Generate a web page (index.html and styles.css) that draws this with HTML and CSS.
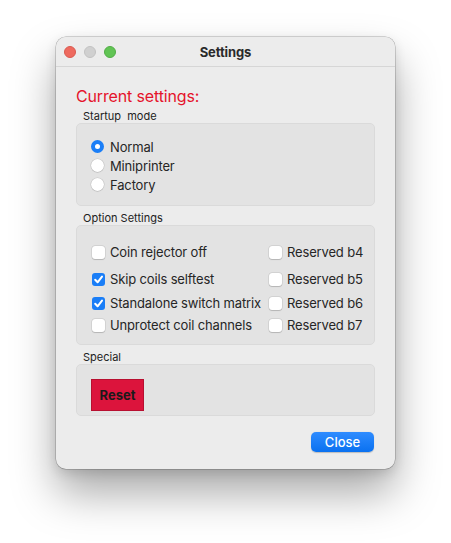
FILE: index.html
```html
<!DOCTYPE html>
<html>
<head>
<meta charset="utf-8">
<link rel="stylesheet" href="styles.css">
</head>
<body>
<div class="window">
  <div class="titlebar">
    <div class="lights">
      <span class="light red"></span>
      <span class="light gray"></span>
      <span class="light green"></span>
    </div>
    <div class="title">Settings</div>
  </div>
  <div class="content">
    <h1 class="heading">Current settings:</h1>

    <div class="group-label">Startup&nbsp; mode</div>
    <div class="group radios">
      <label class="radio-row"><span class="radio on"></span>Normal</label>
      <label class="radio-row"><span class="radio"></span>Miniprinter</label>
      <label class="radio-row"><span class="radio"></span>Factory</label>
    </div>

    <div class="group-label">Option Settings</div>
    <div class="group options">
      <div class="opt"><span class="check"></span>Coin rejector off</div>
      <div class="opt"><span class="check"></span>Reserved b4</div>
      <div class="opt"><span class="check on"><svg viewBox="0 0 13 13"><path d="M3.2 6.8 L5.6 9.3 L10 3.6" fill="none" stroke="#fff" stroke-width="2" stroke-linecap="round" stroke-linejoin="round"/></svg></span>Skip coils selftest</div>
      <div class="opt"><span class="check"></span>Reserved b5</div>
      <div class="opt"><span class="check on"><svg viewBox="0 0 13 13"><path d="M3.2 6.8 L5.6 9.3 L10 3.6" fill="none" stroke="#fff" stroke-width="2" stroke-linecap="round" stroke-linejoin="round"/></svg></span>Standalone switch matrix</div>
      <div class="opt"><span class="check"></span>Reserved b6</div>
      <div class="opt"><span class="check"></span>Unprotect coil channels</div>
      <div class="opt"><span class="check"></span>Reserved b7</div>
    </div>

    <div class="group-label">Special</div>
    <div class="group special">
      <button class="reset">Reset</button>
    </div>

    <div class="footer">
      <button class="close">Close</button>
    </div>
  </div>
</div>
</body>
</html>
```

FILE: styles.css
```css
html, body {
  margin: 0;
  background: #ffffff;
}
body {
  padding: 37px 0 74px 56px;
  min-height: 543px;
  box-sizing: border-box;
  font-family: Inter, "Liberation Sans", sans-serif;
  color: #262626;
}
.window {
  width: 339px;
  height: 432px;
  box-sizing: border-box;
  border-radius: 10px;
  background: #ececec;
  box-shadow: 0 0 0 0.5px rgba(0,0,0,0.3), 0 24px 44px rgba(0,0,0,0.34), 0 4px 12px rgba(0,0,0,0.12);
  overflow: hidden;
}
.titlebar {
  height: 29px;
  border-bottom: 1px solid #d6d6d6;
  background: #ececec;
  position: relative;
  display: flex;
  align-items: center;
  justify-content: center;
}
.lights {
  position: absolute;
  left: 8px;
  top: 9px;
  display: flex;
  gap: 8px;
}
.light {
  width: 12px;
  height: 12px;
  border-radius: 50%;
  box-sizing: border-box;
}
.light.red { background: #ee6a5f; border: 0.5px solid #d95a50; }
.light.gray { background: #d0d0d0; border: 0.5px solid #c2c2c2; }
.light.green { background: #61c454; border: 0.5px solid #52ad46; }
.title {
  font-size: 13px;
  font-weight: 700;
  color: #2a2a2a;
  letter-spacing: -0.1px;
}
.content {
  padding: 19px 20px 0 20px;
}
.heading {
  margin: 0;
  font-size: 16px;
  font-weight: 400;
  line-height: 20px;
  color: #e5132b;
  letter-spacing: -0.15px;
}
.group-label {
  font-size: 11px;
  line-height: 13px;
  padding-left: 7px;
  margin-top: 4px;
  color: #222;
}
.group {
  background: #e3e3e3;
  border: 1px solid #dadada;
  border-radius: 5px;
  box-sizing: border-box;
  margin-bottom: 6px;
}
.radios {
  height: 83px;
  padding: 13px 0 0 14px;
  display: flex;
  flex-direction: column;
}
.radio-row {
  display: flex;
  align-items: center;
  height: 19px;
  font-size: 13px;
  letter-spacing: -0.15px;
  color: #262626;
}
.radio {
  width: 13px;
  height: 13px;
  border-radius: 50%;
  background: #fff;
  box-shadow: 0 0 0 0.5px rgba(0,0,0,0.12), 0 0.5px 1px rgba(0,0,0,0.15);
  margin-right: 6px;
  box-sizing: border-box;
}
.radio.on {
  background: #fff;
  border: 4px solid #1a7ef7;
  box-shadow: none;
}
.options {
  height: 120px;
  padding: 15px 0 0 15px;
  display: grid;
  grid-template-columns: 177px auto;
  grid-template-rows: 22px 27px 24px 22px;
  align-items: end;
  align-content: start;
}
.opt {
  display: flex;
  align-items: center;
  height: 22px;
  font-size: 13px;
  letter-spacing: -0.15px;
  color: #262626;
  white-space: nowrap;
}
.check {
  width: 13px;
  height: 13px;
  border-radius: 3px;
  background: #fff;
  box-shadow: 0 0 0 0.5px rgba(0,0,0,0.12), 0 0.5px 1px rgba(0,0,0,0.15);
  margin-right: 5px;
  display: flex;
  flex: none;
}
.check.on {
  background: #1a7ef7;
  box-shadow: none;
}
.check svg { width: 13px; height: 13px; }
.special {
  height: 52px;
  padding: 14px 0 0 14px;
}
.reset {
  width: 53px;
  height: 32px;
  background: #dc143c;
  border: 1px solid #b80f30;
  font-family: inherit;
  font-size: 13px;
  font-weight: 700;
  color: #1a1a1a;
  padding: 0;
  margin: 0;
  display: block;
}
.footer {
  display: flex;
  justify-content: flex-end;
  padding-top: 10px;
  padding-right: 1px;
}
.close {
  width: 63px;
  height: 20px;
  border-radius: 5px;
  border: none;
  background: linear-gradient(#2f8cff, #0a71f0);
  color: #fff;
  font-family: inherit;
  font-size: 13px;
  font-weight: 500;
  padding: 0;
  box-shadow: 0 0.5px 1px rgba(0,0,0,0.2);
}
```
